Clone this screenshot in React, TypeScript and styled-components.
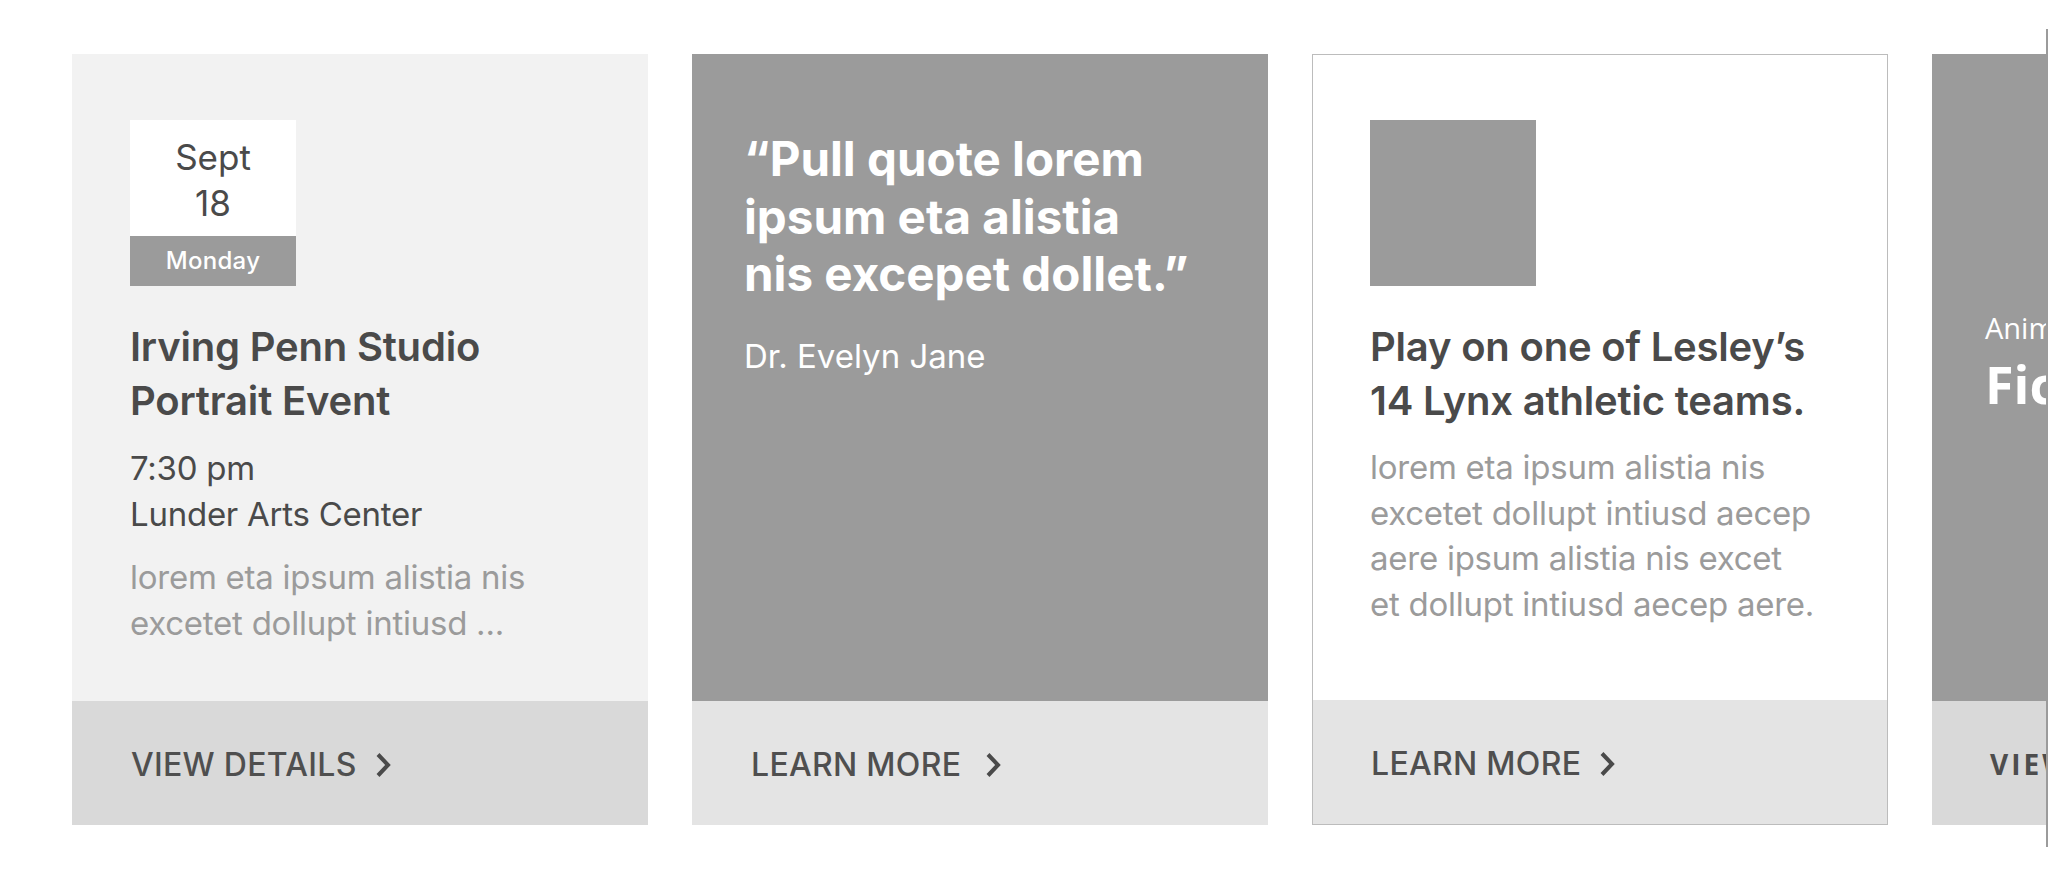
import React from "react";
import styled, { createGlobalStyle } from "styled-components";

const GlobalStyle = createGlobalStyle`
  html, body {
    margin: 0;
    padding: 0;
    background: #ffffff;
    font-family: Inter, "Liberation Sans", sans-serif;
    -webkit-font-smoothing: antialiased;
  }
`;

const Stage = styled.div`
  display: flex;
  width: 2048px;
  height: 886px;
  overflow: hidden;
`;

const Track = styled.div`
  display: flex;
  gap: 44px;
  width: 2046px;
  flex-shrink: 0;
  padding: 54px 0 0 72px;
  box-sizing: border-box;
  overflow: hidden;
`;

const Divider = styled.div`
  width: 2px;
  height: 818px;
  margin-top: 29px;
  background: #9b9b9b;
  flex-shrink: 0;
`;

const Card = styled.div<{ $bg: string; $bordered?: boolean }>`
  width: 576px;
  height: 771px;
  flex-shrink: 0;
  display: flex;
  flex-direction: column;
  box-sizing: border-box;
  background: ${(p) => p.$bg};
  border: ${(p) => (p.$bordered ? "1px solid #bcbcbc" : "none")};
`;

const Body = styled.div<{ $pad?: string }>`
  flex: 1;
  padding: ${(p) => p.$pad || "66px 58px 0"};
  display: flex;
  flex-direction: column;
  align-items: flex-start;
`;

const Footer = styled.div<{ $bg: string; $pad?: string }>`
  height: 124px;
  flex-shrink: 0;
  box-sizing: border-box;
  display: flex;
  align-items: center;
  padding: ${(p) => p.$pad || "3px 59px 0"};
  background: ${(p) => p.$bg};
`;

const FooterLink = styled.a<{ $gap: number }>`
  display: flex;
  align-items: center;
  gap: ${(p) => p.$gap}px;
  color: #4f4f4f;
  font-size: 32px;
  font-weight: 500;
  letter-spacing: 0.3px;
  text-decoration: none;
  line-height: 1;
`;

const DateBox = styled.div`
  width: 166px;
  display: flex;
  flex-direction: column;
`;

const DateTop = styled.div`
  height: 116px;
  box-sizing: border-box;
  padding-top: 14px;
  background: #ffffff;
  color: #4a4a4a;
  text-align: center;
  font-size: 35px;
  line-height: 46px;
`;

const DateBand = styled.div`
  height: 50px;
  background: #9b9b9b;
  color: #ffffff;
  text-align: center;
  font-size: 24px;
  font-weight: 500;
  letter-spacing: 0.3px;
  line-height: 50px;
`;

const Thumb = styled.div`
  width: 166px;
  height: 166px;
  background: #9b9b9b;
`;

const Title = styled.h3`
  margin: 34px 0 0;
  font-size: 40px;
  font-weight: 600;
  line-height: 54px;
  color: #4a4a4a;
  letter-spacing: -0.2px;
`;

const Meta = styled.div`
  margin-top: 17px;
  font-size: 33px;
  line-height: 46px;
  letter-spacing: -0.25px;
  color: #4a4a4a;
`;

const Text = styled.p<{ $top: number }>`
  margin: ${(p) => p.$top}px 0 0;
  font-size: 33px;
  line-height: 45.5px;
  letter-spacing: -0.25px;
  color: #9b9b9b;
`;

const Quote = styled.blockquote`
  margin: 0;
  font-size: 47.5px;
  font-weight: 700;
  line-height: 57.5px;
  color: #ffffff;
`;

const Author = styled.div`
  margin-top: 30px;
  font-size: 33px;
  line-height: 46px;
  color: #ffffff;
`;

const Eyebrow = styled.div`
  font-family: "Open Sans", sans-serif;
  font-size: 29px;
  font-weight: 400;
  line-height: 36px;
  color: #ffffff;
  white-space: nowrap;
`;

const BigTitle = styled.div`
  margin-top: 8px;
  font-family: "Open Sans", sans-serif;
  font-size: 52px;
  font-weight: 700;
  line-height: 60px;
  color: #ffffff;
  white-space: nowrap;
`;

const WideLabel = styled.span`
  font-family: "Open Sans", sans-serif;
  font-size: 28px;
  font-weight: 700;
  letter-spacing: 3px;
  color: #4d4d4d;
  white-space: nowrap;
`;

const Chevron = () => (
  <svg width="16" height="26" viewBox="0 0 16 26" fill="none">
    <polyline
      points="3,2.5 13,13 3,23.5"
      stroke="#4a4a4a"
      strokeWidth="4"
      strokeLinecap="butt"
      strokeLinejoin="miter"
    />
  </svg>
);

export default function App() {
  return (
    <>
      <GlobalStyle />
      <Stage>
        <Track>
          {/* event card */}
          <Card $bg="#f2f2f2">
            <Body>
              <DateBox>
                <DateTop>
                  Sept
                  <br />
                  18
                </DateTop>
                <DateBand>Monday</DateBand>
              </DateBox>
              <Title>
                Irving Penn Studio
                <br />
                Portrait Event
              </Title>
              <Meta>
                7:30 pm
                <br />
                Lunder Arts Center
              </Meta>
              <Text $top={18}>
                lorem eta ipsum alistia nis
                <br />
                excetet dollupt intiusd ...
              </Text>
            </Body>
            <Footer $bg="#d9d9d9">
              <FooterLink href="#" $gap={18}>
                VIEW DETAILS <Chevron />
              </FooterLink>
            </Footer>
          </Card>

          {/* quote card */}
          <Card $bg="#9b9b9b">
            <Body $pad="76px 52px 0">
              <Quote>
                “Pull quote lorem
                <br />
                ipsum eta alistia
                <br />
                nis excepet dollet.”
              </Quote>
              <Author>Dr. Evelyn Jane</Author>
            </Body>
            <Footer $bg="#e4e4e4">
              <FooterLink href="#" $gap={24}>
                LEARN MORE <Chevron />
              </FooterLink>
            </Footer>
          </Card>

          {/* story card */}
          <Card $bg="#ffffff" $bordered>
            <Body $pad="65px 57px 0">
              <Thumb />
              <Title>
                Play on one of Lesley’s
                <br />
                14 Lynx athletic teams.
              </Title>
              <Text $top={17}>
                lorem eta ipsum alistia nis
                <br />
                excetet dollupt intiusd aecep
                <br />
                aere ipsum alistia nis excet
                <br />
                et dollupt intiusd aecep aere.
              </Text>
            </Body>
            <Footer $bg="#e4e4e4" $pad="4px 58px 0">
              <FooterLink href="#" $gap={18}>
                LEARN MORE <Chevron />
              </FooterLink>
            </Footer>
          </Card>

          {/* feature card, cut off by the edge */}
          <Card $bg="#9b9b9b">
            <Body $pad="256px 53px 0">
              <Eyebrow>Animation</Eyebrow>
              <BigTitle>Fiction</BigTitle>
            </Body>
            <Footer $bg="#d9d9d9" $pad="2px 58px 0">
              <WideLabel>VIEW DETAILS</WideLabel>
            </Footer>
          </Card>
        </Track>
        <Divider />
      </Stage>
    </>
  );
}
